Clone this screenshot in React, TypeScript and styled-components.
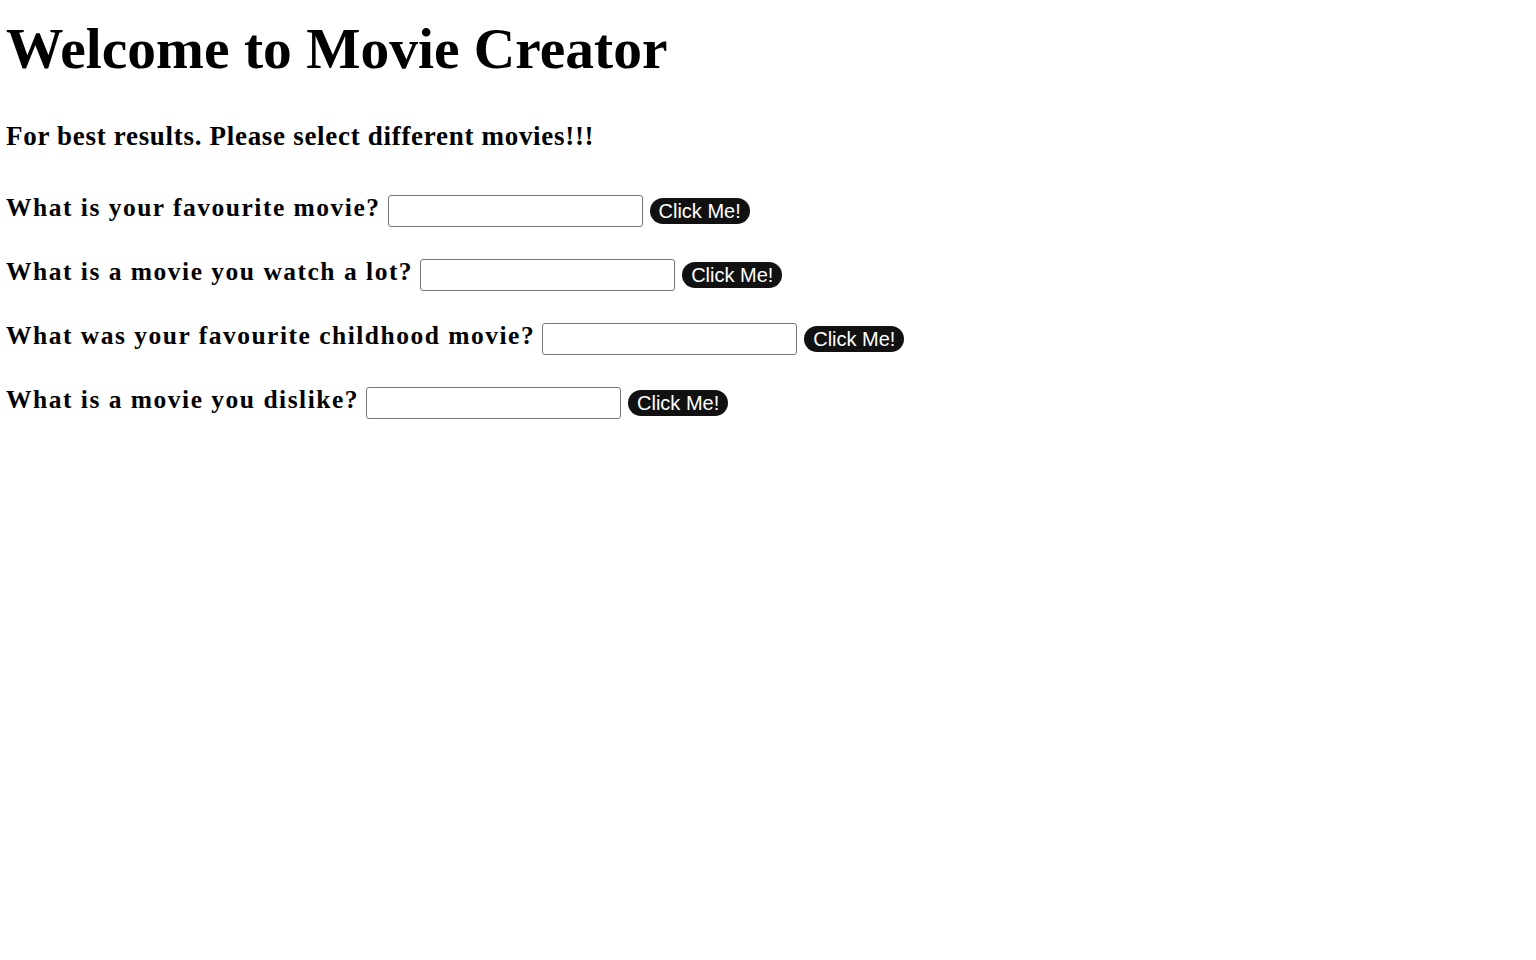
import React from "react";
import styled, { createGlobalStyle } from "styled-components";

const GlobalStyle = createGlobalStyle`
  html, body { margin: 0; padding: 0; background: #ffffff; }
  body { font-family: "Liberation Serif", "Times New Roman", serif; color: #000; }
`;

const Page = styled.main`
  display: flex;
  flex-direction: column;
  padding: 0 6px;
`;

const Title = styled.h1`
  margin: 14px 0 0;
  font-size: 57.5px;
  line-height: 70px;
  font-weight: 700;
`;

const Subtitle = styled.h2`
  margin: 36px 0 0;
  font-size: 27px;
  letter-spacing: 0.7px;
  line-height: 32px;
  font-weight: 700;
`;

const Form = styled.form`
  display: flex;
  flex-direction: column;
  gap: 32px;
  margin-top: 43px;
`;

const Row = styled.div`
  display: flex;
  align-items: center;
  height: 32px;
`;

const Label = styled.label`
  font-size: 25.5px;
  font-weight: 700;
  letter-spacing: 1.5px;
  line-height: 32px;
  margin: 0 7px 6px 0;
`;

const TextInput = styled.input`
  box-sizing: border-box;
  width: 255px;
  height: 32px;
  border: 1px solid #767676;
  border-radius: 3px;
  padding: 0 6px;
  font-size: 18px;
  font-family: "Liberation Sans", Arial, sans-serif;
`;

const Button = styled.button`
  box-sizing: border-box;
  height: 26px;
  margin: 0 0 1px 7px;
  padding: 0 9px;
  border: none;
  border-radius: 13px;
  background: #111111;
  color: #ffffff;
  font-family: "Liberation Sans", Arial, sans-serif;
  font-size: 20px;
  line-height: 26px;
  cursor: pointer;
`;

const questions = [
  "What is your favourite movie?",
  "What is a movie you watch a lot?",
  "What was your favourite childhood movie?",
  "What is a movie you dislike?",
];

export default function App() {
  return (
    <>
      <GlobalStyle />
      <Page>
        <Title>Welcome to Movie Creator</Title>
        <Subtitle>For best results. Please select different movies!!!</Subtitle>
        <Form onSubmit={(e) => e.preventDefault()}>
          {questions.map((q, i) => (
            <Row key={i}>
              <Label htmlFor={`movie-${i}`}>{q}</Label>
              <TextInput id={`movie-${i}`} type="text" />
              <Button type="button">Click Me!</Button>
            </Row>
          ))}
        </Form>
      </Page>
    </>
  );
}
